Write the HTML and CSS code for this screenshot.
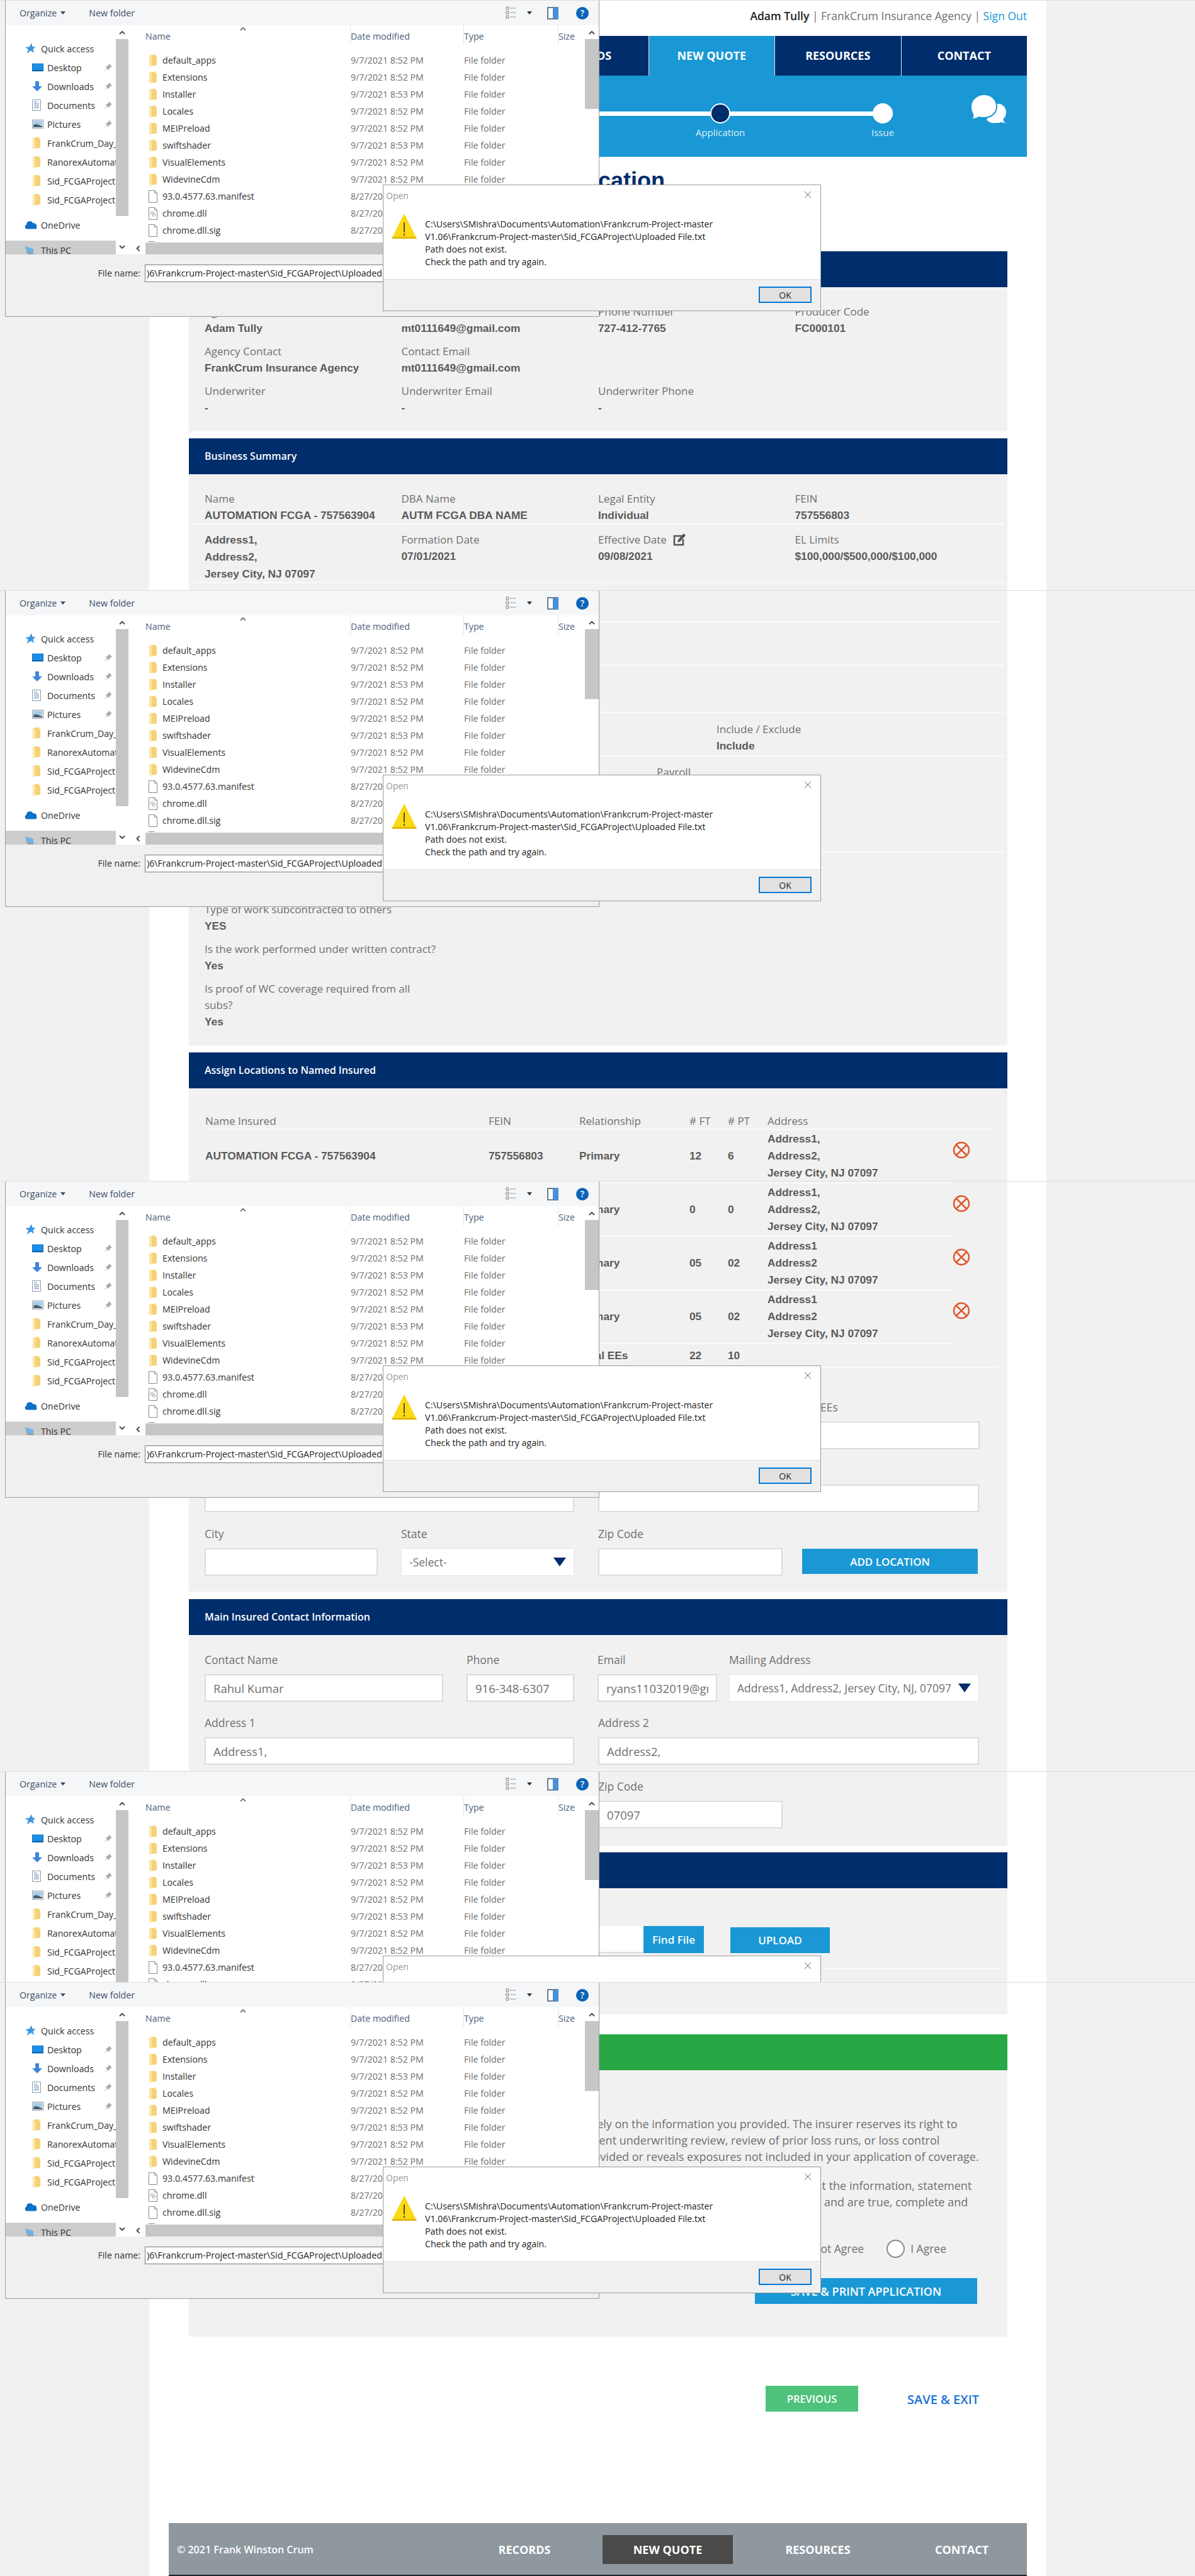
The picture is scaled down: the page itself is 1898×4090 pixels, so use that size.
FILE: index.html
```html
<!DOCTYPE html>
<html lang="en">

<head>
  <meta charset="UTF-8" />
  <title>New Quote - Application</title>
  <link rel="stylesheet" href="styles.css">
</head>

<body>
  <!-- icons used by the page and the file dialogs -->
  <svg class="sprite" xmlns="http://www.w3.org/2000/svg">
    <symbol id="i-folder" viewBox="0 0 14 20">
      <path d="M1 2l10-1.500v2.500l2 .5v14l-2 .5-10 1z" fill="#f5d277" />
      <path d="M1 2l4 1v16l-4 .5z" fill="#fbe6a6" />
    </symbol>
    <symbol id="i-file" viewBox="0 0 14 20">
      <path d="M.5 .5h9l4 4v15h-13z" fill="#fff" stroke="#8a8a8a" />
      <path d="M9.500 .5v4h4" fill="none" stroke="#8a8a8a" />
    </symbol>
    <symbol id="i-dll" viewBox="0 0 14 20">
      <path d="M.5 .5h9l4 4v15h-13z" fill="#fff" stroke="#8a8a8a" />
      <path d="M9.500 .5v4h4" fill="none" stroke="#8a8a8a" />
      <circle cx="5.500" cy="9" r="2.200" fill="none" stroke="#999" />
      <circle cx="8.500" cy="12" r="2.200" fill="none" stroke="#999" />
    </symbol>
    <symbol id="i-star" viewBox="0 0 18 18">
      <path d="M11 .5l1.500 5.500 5 .5-4 3.500 1.500 6-5-3.500-6.500 4.500 2.500-6.500-5-3.500 6.500-.5z" fill="#3d97e0" />
    </symbol>
    <symbol id="i-desktop" viewBox="0 0 18 13">
      <rect x=".5" y=".5" width="17" height="12" fill="#1b8fe8" stroke="#0b6bb8" />
      <rect x="1" y="10.500" width="16" height="2" fill="#0b5ea6" />
    </symbol>
    <symbol id="i-down" viewBox="0 0 16 16">
      <path d="M5 0h6v8h5l-8 8-8-8h5z" fill="#3f86d8" />
    </symbol>
    <symbol id="i-doc" viewBox="0 0 14 18">
      <path d="M.5 .5h13v17h-13z" fill="#fff" stroke="#8d9bab" />
      <path d="M3 4h5M3 7h8M3 10h8M3 13h8" stroke="#4a7aa8" />
    </symbol>
    <symbol id="i-pic" viewBox="0 0 18 14">
      <rect x=".5" y=".5" width="17" height="13" fill="#e8f2f8" stroke="#8d9bab" />
      <path d="M2 2h14v6H2z" fill="#a7cbe4" />
      <path d="M2 12V8l5-1 9 3v2z" fill="#47606e" />
    </symbol>
    <symbol id="i-cloud" viewBox="0 0 20 14">
      <path d="M4 13.500a3.500 3.500 0 0 1-1-6.800 5.500 5.500 0 0 1 10.500-2.300 4.500 4.500 0 0 1 5.500 5.600 2.500 2.500 0 0 1-1 3.500z" fill="#0f6fc6" />
    </symbol>
    <symbol id="i-pc" viewBox="0 0 16 14">
      <path d="M1 1l13 4v7L3 10z" fill="#6fb2e4" />
      <path d="M3 10l11 2 1 1.500H5z" fill="#8a9aa8" />
    </symbol>
    <symbol id="i-pin" viewBox="0 0 12 12">
      <path d="M7 0l5 5-2 .5-2.500 2.500-.5 2.500-2.500-2.500-3.500 3.500-.5-.5 3.500-3.500L1.500 5 4 4.500l2.500-2.500z" fill="#a9a9a9" />
    </symbol>
    <symbol id="i-chev" viewBox="0 0 10 7">
      <path d="M1 6l4-4 4 4" fill="none" stroke="currentColor" stroke-width="1.800" />
    </symbol>
    <symbol id="i-remove" viewBox="0 0 28 28">
      <circle cx="14" cy="14" r="12" fill="none" stroke="#e0582b" stroke-width="2.500" />
      <path d="M6 6l16 16M22 6L6 22" stroke="#e0582b" stroke-width="2.500" />
    </symbol>
  </svg>

  <div class="page">
    <div class="user-bar">
      <strong>Adam Tully</strong>&nbsp;| FrankCrum Insurance Agency |&nbsp;<a href="#">Sign Out</a>
    </div>

    <nav class="main-nav">
      <a href="#">HOME</a>
      <a href="#">AGENCY</a>
      <a href="#">RECORDS</a>
      <a href="#" class="active">NEW QUOTE</a>
      <a href="#">RESOURCES</a>
      <a href="#">CONTACT</a>
    </nav>

    <div class="hero">
      <div class="steps">
        <div class="step step-current"><span class="dot"></span><span class="step-name">Application</span></div>
        <div class="step"><span class="dot"></span><span class="step-name">Issue</span></div>
      </div>
      <svg class="chat-icon" viewBox="0 0 62 47" width="62" height="47">
        <path d="M42 15a13 13 0 0 1 15 13c0 5-2 9-5 11l2 5 4 2-9-2a14 14 0 0 1-9 1 14 14 0 0 1-14-5z" fill="#fff" />
        <path d="M22 0c11 0 20 8 20 19s-9 18-20 18c-3 0-6 0-8-1-4 3-9 3-13 3 3-2 4-5 3-8C2 28 1 24 1 19 1 8 11 0 22 0z" fill="#fff" stroke="#1a98d5" stroke-width="2" />
      </svg>
    </div>

    <h1 class="page-title">Workers Compensation Quote Application</h1>

    <section class="panel">
      <h2 class="panel-head">Agency Information</h2>
      <div class="panel-body summary-agency">
        <div class="field"><label>Agent</label><b>Adam Tully</b></div>
        <div class="field"><label>Email</label><b>mt0111649@gmail.com</b></div>
        <div class="field"><label>Phone Number</label><b>727-412-7765</b></div>
        <div class="field"><label>Producer Code</label><b>FC000101</b></div>
        <div class="field"><label>Agency Contact</label><b>FrankCrum Insurance Agency</b></div>
        <div class="field"><label>Contact Email</label><b>mt0111649@gmail.com</b></div>
        <div class="field"></div>
        <div class="field"></div>
        <div class="field"><label>Underwriter</label><b>-</b></div>
        <div class="field"><label>Underwriter Email</label><b>-</b></div>
        <div class="field"><label>Underwriter Phone</label><b>-</b></div>
      </div>
    </section>

    <section class="panel panel-business">
      <h2 class="panel-head">Business Summary</h2>
      <div class="panel-body business-body">
        <div class="summary-row row-name">
          <div class="field"><label>Name</label><b>AUTOMATION FCGA - 757563904</b></div>
          <div class="field"><label>DBA Name</label><b>AUTM FCGA DBA NAME</b></div>
          <div class="field"><label>Legal Entity</label><b>Individual</b></div>
          <div class="field"><label>FEIN</label><b>757556803</b></div>
        </div>
        <div class="summary-row row-dates">
          <div class="field address"><b>Address1,</b><b>Address2,</b><b>Jersey City, NJ 07097</b></div>
          <div class="field"><label>Formation Date</label><b>07/01/2021</b></div>
          <div class="field">
            <label>Effective Date
              <svg class="edit-icon" viewBox="0 0 20 20" width="20" height="20">
                <path d="M15 4H2v14h14V9" fill="none" stroke="#555" stroke-width="2.500" />
                <path d="M17 0l3 3-9 10-4 1 1-4z" fill="#555" />
              </svg>
            </label>
            <b>09/08/2021</b>
          </div>
          <div class="field"><label>EL Limits</label><b>$100,000/$500,000/$100,000</b></div>
        </div>
        <div class="blank-row row-a"></div>
        <div class="blank-row row-b"></div>
        <div class="blank-row row-c"></div>
        <div class="summary-row row-include">
          <div class="field"></div>
          <div class="field field-include"><label>Include / Exclude</label><b>Include</b></div>
        </div>
        <div class="summary-row row-payroll">
          <div class="field"></div>
          <div class="field field-payroll"><label>Payroll</label></div>
        </div>
        <div class="questions">
          <div class="field"><label>Type of work subcontracted to others</label><b>YES</b></div>
          <div class="field"><label>Is the work performed under written contract?</label><b>Yes</b></div>
          <div class="field"><label>Is proof of WC coverage required from all<br>subs?</label><b>Yes</b></div>
        </div>
      </div>
    </section>

    <section class="panel panel-locations">
      <h2 class="panel-head">Assign Locations to Named Insured</h2>
      <div class="panel-body locations-body">
        <div class="loc-grid loc-head">
          <span>Name Insured</span><span>FEIN</span><span>Relationship</span><span># FT</span><span># PT</span><span>Address</span>
        </div>
        <div class="loc-grid loc-row">
          <b>AUTOMATION FCGA - 757563904</b><b>757556803</b><b>Primary</b><b>12</b><b>6</b>
          <b class="loc-address">Address1,<br>Address2,<br>Jersey City, NJ 07097</b>
          <svg class="remove-icon" viewBox="0 0 28 28"><use href="#i-remove" /></svg>
        </div>
        <div class="loc-grid loc-row">
          <b>AUTOMATION FCGA - 757563904</b><b>757556803</b><b>Primary</b><b>0</b><b>0</b>
          <b class="loc-address">Address1,<br>Address2,<br>Jersey City, NJ 07097</b>
          <svg class="remove-icon" viewBox="0 0 28 28"><use href="#i-remove" /></svg>
        </div>
        <div class="loc-grid loc-row">
          <b>AUTOMATION FCGA - 757563904</b><b>757556803</b><b>Primary</b><b>05</b><b>02</b>
          <b class="loc-address">Address1<br>Address2<br>Jersey City, NJ 07097</b>
          <svg class="remove-icon" viewBox="0 0 28 28"><use href="#i-remove" /></svg>
        </div>
        <div class="loc-grid loc-row">
          <b>AUTOMATION FCGA - 757563904</b><b>757556803</b><b>Primary</b><b>05</b><b>02</b>
          <b class="loc-address">Address1<br>Address2<br>Jersey City, NJ 07097</b>
          <svg class="remove-icon" viewBox="0 0 28 28"><use href="#i-remove" /></svg>
        </div>
        <div class="loc-grid loc-total">
          <b></b><b></b><b>Total EEs</b><b>22</b><b>10</b>
        </div>

        <div class="form-row form-row-loc">
          <div class="input-group span-2"><label>Location Name</label><input type="text" /></div>
          <div class="input-group"><label># FT EEs</label><input type="text" /></div>
          <div class="input-group"><label># PT EEs</label><input type="text" /></div>
        </div>
        <div class="form-row form-row-half">
          <div class="input-group"><label>Address 1</label><input type="text" /></div>
          <div class="input-group"><label>Address 2</label><input type="text" /></div>
        </div>
        <div class="form-row form-row-city">
          <div class="input-group"><label>City</label><input type="text" /></div>
          <div class="input-group">
            <label>State</label>
            <div class="select"><span>-Select-</span><i class="caret"></i></div>
          </div>
          <div class="input-group"><label>Zip Code</label><input type="text" /></div>
          <button class="btn btn-add">ADD LOCATION</button>
        </div>
      </div>
    </section>

    <section class="panel panel-contact">
      <h2 class="panel-head">Main Insured Contact Information</h2>
      <div class="panel-body contact-body">
        <div class="form-row form-row-contact">
          <div class="input-group"><label>Contact Name</label><input type="text" value="Rahul Kumar" /></div>
          <div class="input-group"><label>Phone</label><input type="text" value="916-348-6307" /></div>
          <div class="input-group"><label>Email</label><input type="text" value="ryans11032019@gmail.com" /></div>
          <div class="input-group">
            <label>Mailing Address</label>
            <div class="select"><span>Address1, Address2, Jersey City, NJ, 07097</span><i class="caret"></i></div>
          </div>
        </div>
        <div class="form-row form-row-half">
          <div class="input-group"><label>Address 1</label><input type="text" value="Address1," /></div>
          <div class="input-group"><label>Address 2</label><input type="text" value="Address2," /></div>
        </div>
        <div class="form-row form-row-city form-row-zip">
          <div class="input-group"><label>City</label><input type="text" value="Jersey City" /></div>
          <div class="input-group"><label>State</label><input type="text" value="NJ" /></div>
          <div class="input-group"><label>Zip Code</label><input type="text" value="07097" /></div>
        </div>
      </div>
    </section>

    <section class="panel panel-upload">
      <h2 class="panel-head">Upload Documents</h2>
      <div class="panel-body upload-body">
        <div class="upload-row">
          <input type="text" class="upload-input" />
          <button class="btn btn-find">Find File</button>
          <button class="btn btn-upload">UPLOAD</button>
        </div>
        <div class="upload-line"></div>
      </div>
    </section>

    <section class="panel panel-agree">
      <h2 class="panel-head panel-head-green">Agreement</h2>
      <div class="panel-body agree-body">
        <p>Please note that a quote is an estimate only, and the premium is based solely on the information you provided. The insurer reserves its right to<br>
          change the premium and the terms of this coverage following any subsequent underwriting review, review of prior loss runs, or loss control<br>
          inspection if the information gathered differs from the information you provided or reveals exposures not included in your application of coverage.</p>
        <p>By selecting I Agree below, the applicant acknowledges and agrees that a quote is subject to change and confirms that the information, statement<br>
          and the answers provided in this application have been fully reviewed by the applicant and by the producer of record and are true, complete and<br>
          correct.</p>
        <div class="agree-choice">
          <label><span class="radio"></span>I Do Not Agree</label>
          <label><span class="radio"></span>I Agree</label>
        </div>
        <button class="btn btn-print">SAVE &amp; PRINT APPLICATION</button>
      </div>
    </section>

    <div class="page-actions">
      <button class="btn btn-prev">PREVIOUS</button>
      <a href="#" class="save-exit">SAVE &amp; EXIT</a>
    </div>

    <footer class="footer">
      <span class="copyright">© 2021 Frank Winston Crum</span>
      <a href="#">RECORDS</a>
      <a href="#" class="active">NEW QUOTE</a>
      <a href="#">RESOURCES</a>
      <a href="#" class="footer-last">CONTACT</a>
    </footer>
  </div>

  <!-- the same pair of windows is pasted over the page five times, see script.js -->
  <template id="shotTemplate">
    <div class="shot">
      <div class="file-window">
        <div class="toolbar">
          <span class="tool">Organize<i class="mini-caret"></i></span>
          <span class="tool tool-new">New folder</span>
          <span class="tool-right">
            <svg class="view-icon" viewBox="0 0 18 22" width="18" height="22">
              <path d="M1 1h4v4H1zM1 8h4v4H1zM1 15h4v4H1z" fill="none" stroke="#7a7a7a" />
              <path d="M8 3h9M8 10h9M8 17h9" stroke="#5a6a7a" stroke-dasharray="2 1" />
            </svg>
            <i class="mini-caret mini-caret-dark"></i>
            <span class="pane-icon"></span>
            <span class="help-icon">?</span>
          </span>
        </div>
        <div class="browser">
          <div class="tree">
            <div class="tree-row level-1"><svg width="18" height="18"><use href="#i-star" /></svg>Quick access</div>
            <div class="tree-row level-2"><svg width="18" height="13"><use href="#i-desktop" /></svg>Desktop<svg class="pin" width="12" height="12"><use href="#i-pin" /></svg></div>
            <div class="tree-row level-2"><svg width="16" height="16"><use href="#i-down" /></svg>Downloads<svg class="pin" width="12" height="12"><use href="#i-pin" /></svg></div>
            <div class="tree-row level-2"><svg width="14" height="18"><use href="#i-doc" /></svg>Documents<svg class="pin" width="12" height="12"><use href="#i-pin" /></svg></div>
            <div class="tree-row level-2"><svg width="18" height="14"><use href="#i-pic" /></svg>Pictures<svg class="pin" width="12" height="12"><use href="#i-pin" /></svg></div>
            <div class="tree-row level-2"><svg width="14" height="20"><use href="#i-folder" /></svg>FrankCrum_Day_4</div>
            <div class="tree-row level-2"><svg width="14" height="20"><use href="#i-folder" /></svg>RanorexAutomation</div>
            <div class="tree-row level-2"><svg width="14" height="20"><use href="#i-folder" /></svg>Sid_FCGAProject</div>
            <div class="tree-row level-2"><svg width="14" height="20"><use href="#i-folder" /></svg>Sid_FCGAProject</div>
            <div class="tree-row level-1 tree-gap"><svg width="20" height="14"><use href="#i-cloud" /></svg>OneDrive</div>
            <div class="tree-row level-1 tree-gap tree-selected"><svg width="16" height="14"><use href="#i-pc" /></svg>This PC</div>
          </div>
          <div class="scroll-y scroll-tree">
            <svg class="arrow" width="10" height="7"><use href="#i-chev" /></svg>
            <span class="thumb"></span>
            <svg class="arrow arrow-down" width="10" height="7"><use href="#i-chev" /></svg>
          </div>
          <div class="files">
            <div class="file-list">
              <div class="file-head">
                <span>Name<svg class="sort-mark" width="10" height="7"><use href="#i-chev" /></svg></span><span>Date modified</span><span>Type</span><span>Size</span>
              </div>
              <div class="file-rows"></div>
            </div>
            <div class="scroll-x">
              <svg class="arrow-left" width="10" height="7"><use href="#i-chev" /></svg>
              <span class="thumb"></span>
            </div>
          </div>
          <div class="scroll-y scroll-files">
            <svg class="arrow" width="10" height="7"><use href="#i-chev" /></svg>
            <span class="thumb"></span>
          </div>
        </div>
        <div class="name-bar">
          <span class="name-label">File name:</span>
          <span class="name-input">)6\Frankcrum-Project-master\Sid_FCGAProject\Uploaded File.txt</span>
        </div>
      </div>

      <div class="alert-box">
        <div class="alert-title">Open
          <svg class="alert-close" viewBox="0 0 12 12" width="12" height="12"><path d="M1 1l10 10M11 1L1 11" stroke="#666" /></svg>
        </div>
        <div class="alert-body">
          <svg class="warn-icon" viewBox="0 0 40 40" width="40" height="40">
            <path d="M20 0l20 40H0z" fill="#fbd914" />
            <path d="M0 40h40l-1.500-3h-37z" fill="#e3b90c" />
            <path d="M20 14v16M20 32v3" stroke="#222" stroke-width="1.500" />
          </svg>
          <div class="alert-text">
            C:\Users\SMishra\Documents\Automation\Frankcrum-Project-master<br>
            V1.06\Frankcrum-Project-master\Sid_FCGAProject\Uploaded File.txt<br>
            Path does not exist.<br>
            Check the path and try again.
          </div>
        </div>
        <div class="alert-foot"><button class="ok-btn">OK</button></div>
      </div>
    </div>
  </template>

  <script src="script.js"></script>
</body>

</html>
```
FILE: styles.css
```css
* {
  margin: 0;
  padding: 0;
  box-sizing: border-box;
}

body {
  background-color: #f1f1f1;
  color: #707070;
  font-family: "Open Sans", sans-serif;
  font-size: 17px;
  position: relative;
  height: 4090px;
  overflow: hidden;
}

.sprite {
  position: absolute;
  width: 0;
  height: 0;
}

/* Page */
.page {
  width: 1425px;
  height: 4090px;
  margin-left: 237px;
  padding: 0 31px;
  background: #fff;
  display: flex;
  flex-direction: column;
}

.user-bar {
  height: 57px;
  padding-top: 13px;
  text-align: right;
  font-size: 17.500px;
  line-height: 24px;
}

.user-bar strong {
  color: #222;
  font-weight: 600;
}

.user-bar a {
  color: #1a98d5;
  text-decoration: none;
}

.main-nav {
  height: 63px;
  background: #002d6b;
  display: flex;
  justify-content: flex-end;
}

.main-nav a {
  width: 200.500px;
  line-height: 63px;
  text-align: center;
  color: #fff;
  font-weight: 700;
  font-size: 18px;
  text-decoration: none;
  border-left: 1px solid #dfe6ee;
}

.main-nav a.active {
  background: #1a98d5;
}

.hero {
  height: 129px;
  background: #1a98d5;
  position: relative;
  padding-top: 44px;
}

.steps {
  width: 1017px;
  margin-left: 133px;
  height: 34px;
  background: linear-gradient(#fff, #fff) no-repeat left 13px / 100% 7px;
  display: flex;
  justify-content: flex-end;
  gap: 226px;
}

.step {
  width: 32px;
  position: relative;
}

.dot {
  display: block;
  width: 32px;
  height: 32px;
  border-radius: 50%;
  background: #fff;
}

.step-current .dot {
  background: #002d6b;
  border: 2px solid #fff;
}

.step-name {
  position: absolute;
  top: 36px;
  left: 50%;
  transform: translateX(-50%);
  color: #fff;
  font-size: 15px;
  line-height: 20px;
  opacity: .85;
}

.chat-icon {
  position: absolute;
  right: 28px;
  top: 30px;
}

.page-title {
  height: 150px;
  padding-top: 16px;
  padding-left: 66px;
  color: #002d6b;
  font-family: "Liberation Sans", Arial, sans-serif;
  font-size: 36px;
  font-weight: 700;
  white-space: nowrap;
  line-height: 44px;
}

/* Panels */
.panel {
  width: 1300px;
  margin-left: 32px;
  background: #f1f1f1;
}

.panel-head {
  height: 57px;
  padding-left: 25px;
  background: #002d6b;
  color: #fff;
  font-size: 16px;
  font-weight: 600;
  line-height: 57px;
}

.panel-head-green {
  background: #28a745;
}

.panel-body {
  padding: 0 25px;
}

.field label {
  display: block;
  line-height: 26px;
}

.field b,
.loc-grid b {
  display: block;
  font-family: "Liberation Sans", Arial, sans-serif;
  font-weight: 700;
  font-size: 17.300px;
  color: #5a5a5a;
}

.field b {
  line-height: 26px;
}

.summary-agency {
  height: 229px;
  padding-top: 26px;
  display: grid;
  grid-template-columns: repeat(4, 312.500px);
  grid-auto-rows: 63px;
}

.panel-business {
  margin-top: 11px;
}

.business-body {
  height: 907px;
  padding-top: 26px;
}

.summary-row {
  display: grid;
  grid-template-columns: repeat(4, 312.500px);
  margin: 0 -20px;
  padding: 0 20px;
  border-bottom: 2px solid #fafafa;
}

.row-name {
  height: 54px;
}

.row-dates {
  height: 93px;
  padding-top: 11px;
}

.field.address b {
  line-height: 27px;
}

.edit-icon {
  vertical-align: -4px;
  margin-left: 6px;
}

.blank-row {
  margin: 0 -20px;
  border-bottom: 2px solid #fafafa;
}

.row-a { height: 62px; }
.row-b { height: 69px; }
.row-c { height: 75px; }

.row-include {
  height: 70px;
  padding-top: 13px;
  grid-template-columns: 813px 1fr;
}

.row-payroll {
  height: 151px;
  padding-top: 11px;
  grid-template-columns: 718px 1fr;
}

.questions {
  padding-top: 78px;
  width: 420px;
}

.questions .field {
  margin-bottom: 11px;
}

/* Locations table */
.panel-locations {
  margin-top: 11px;
}

.locations-body {
  height: 799px;
  padding-top: 38px;
}

.loc-grid {
  display: grid;
  grid-template-columns: 450px 144px 175px 61px 63px 1fr;
  align-items: center;
  position: relative;
}

.loc-head {
  height: 26px;
  padding-left: 1px;
  margin-right: -2px;
  border-bottom: 2px solid #fafafa;
  box-sizing: content-box;
}

.loc-row {
  height: 85px;
  padding-left: 1px;
  margin-right: 63px;
  border-bottom: 2px solid #fafafa;
}

.loc-row .loc-address {
  line-height: 27px;
}

.remove-icon {
  position: absolute;
  width: 28px;
  height: 28px;
  left: 1188px;
  top: 18px;
}

.loc-total {
  height: 38px;
  padding-left: 1px;
  margin: 0 -8px 0 0;
  border-bottom: 2px solid #fafafa;
}

.form-row {
  display: grid;
}

.input-group label {
  display: block;
  line-height: 24px;
  margin-bottom: 11px;
  font-size: 17.500px;
}

.input-group input {
  display: block;
  width: 100%;
  height: 44px;
  padding: 0 12px;
  background: #fff;
  border: 2px solid #dcdcdc;
  color: #707070;
  font-family: inherit;
  font-size: 18.500px;
  outline: none;
}

.select {
  height: 44px;
  padding: 0 12px;
  background: #fff;
  border: 1px solid #e6e6e6;
  display: flex;
  align-items: center;
  justify-content: space-between;
  white-space: nowrap;
  font-size: 17.500px;
}

.caret {
  width: 0;
  height: 0;
  border-left: 10px solid transparent;
  border-right: 10px solid transparent;
  border-top: 14px solid #002d6b;
  flex: none;
}

.form-row-loc {
  margin-top: 50px;
  grid-template-columns: repeat(4, 312.500px);
}

.form-row-loc .span-2 {
  grid-column: span 2;
}

.form-row-loc .input-group input {
  width: 293px;
}

.form-row-loc .input-group:nth-child(1) input,
.form-row-half .input-group:nth-child(1) input {
  width: 587px;
}

.form-row-half {
  grid-template-columns: 625px 605px;
  margin-top: 21px;
}

.form-row-city {
  grid-template-columns: 312px 313px 324px 1fr;
  margin-top: 22px;
}

.form-row-city .input-group:nth-child(1) input,
.form-row-city .input-group:nth-child(2) input,
.form-row-city .select {
  width: 275px;
}

.form-row-city .input-group:nth-child(3) input {
  width: 293px;
}

.btn {
  border: none;
  background: #1a98d5;
  color: #fff;
  font-family: inherit;
  font-size: 17px;
  font-weight: 600;
  cursor: pointer;
}

.btn-add {
  height: 40px;
  width: 279px;
  align-self: end;
  margin-bottom: 3px;
}

/* Main insured contact */
.panel-contact {
  margin-top: 12px;
}

.contact-body {
  height: 335px;
  padding-top: 27px;
}

.form-row-contact {
  grid-template-columns: 416px 208px 209px 397px;
}

.form-row-contact .input-group:nth-child(1) input { width: 379px; }
.form-row-contact .input-group:nth-child(2) input { width: 171px; }
.form-row-contact .input-group:nth-child(3) input { width: 190px; }

/* Upload */
.panel-upload {
  margin-top: 10px;
}

.upload-body {
  height: 200px;
  padding-top: 60px;
}

.upload-row {
  display: flex;
  align-items: flex-end;
  padding-left: 372px;
  height: 43px;
}

.upload-input {
  width: 325px;
  height: 43px;
  background: #fff;
  border: none;
  border-bottom: 2px solid #dcdcdc;
}

.btn-find {
  width: 96px;
  height: 43px;
}

.btn-upload {
  width: 158px;
  height: 41px;
  margin-left: 42px;
}

.upload-line {
  margin: 23px -20px 0;
  border-bottom: 2px solid #fafafa;
}

/* Agreement */
.panel-agree {
  margin-top: 32px;
}

.agree-body {
  height: 423px;
  padding-top: 72px;
}

.agree-body p {
  white-space: nowrap;
  line-height: 26px;
  font-size: 18px;
  margin-bottom: 20px;
}

.agree-choice {
  display: flex;
  justify-content: flex-end;
  gap: 36px;
  padding-right: 72px;
  margin-top: 5px;
  font-size: 17.500px;
  line-height: 30px;
}

.agree-choice label {
  display: flex;
  align-items: center;
  gap: 9px;
}

.radio {
  width: 29px;
  height: 29px;
  border-radius: 50%;
  background: #fff;
  border: 2px solid #8a8a8a;
}

.btn-print {
  display: block;
  width: 353px;
  height: 41px;
  margin: 32px 0 0 874px;
  font-size: 18px;
}

/* Bottom of page */
.page-actions {
  margin-left: 948px;
  margin-top: 78px;
  height: 41px;
  display: flex;
  align-items: center;
}

.btn-prev {
  width: 147px;
  height: 41px;
  background: #4fc27b;
  font-size: 16.500px;
}

.save-exit {
  margin-left: 78px;
  padding-top: 2px;
  color: #1a73d8;
  font-size: 20px;
  font-weight: 600;
  text-decoration: none;
}

.footer {
  margin-top: auto;
  height: 84px;
  padding-top: 1px;
  background: #8f989f;
  border-bottom: 2px solid #222;
  display: grid;
  grid-template-columns: 441px 248px 207px 270px 1fr;
  align-items: center;
  color: #fff;
  text-align: center;
  font-weight: 700;
  font-size: 18px;
}

.footer a {
  color: #fff;
  text-decoration: none;
  line-height: 46px;
}

.footer a.active {
  background: #4a4a4a;
}

.footer-last {
  padding-right: 10px;
}

.copyright {
  text-align: left;
  padding-left: 13px;
  font-weight: 600;
  font-size: 16px;
}

/* Pasted dialog windows */
.shot {
  position: absolute;
  left: 0;
  right: 0;
  height: 503px;
  overflow: hidden;
  border-top: 1px solid #dedede;
}

.shot-1 { top: 0; }
.shot-2 { top: 937px; }
.shot-3 { top: 1875px; }
.shot-4 { top: 2812px; height: 335px; }
.shot-5 { top: 3147px; }

.file-window {
  width: 944px;
  height: 502px;
  margin-left: 8px;
  background: #fff;
  border: 1px solid #9b9b9b;
  border-top: none;
  color: #333;
  font-size: 14.200px;
  display: flex;
  flex-direction: column;
}

.toolbar {
  height: 39px;
  flex: none;
  background: #f5f6f7;
  padding: 0 16px 0 22px;
  display: flex;
  align-items: center;
  color: #3b4d66;
}

.tool {
  display: flex;
  align-items: center;
  gap: 6px;
}

.tool-new {
  margin-left: 37px;
}

.mini-caret {
  width: 0;
  height: 0;
  border-left: 4px solid transparent;
  border-right: 4px solid transparent;
  border-top: 5px solid #3b4d66;
}

.tool-right {
  margin-left: auto;
  display: flex;
  align-items: center;
}

.mini-caret-dark {
  margin-left: 16px;
  border-top-color: #333;
}

.pane-icon {
  margin-left: 24px;
  width: 18px;
  height: 20px;
  border: 2px solid #6b7c8e;
  border-right-width: 9px;
  border-right-color: #4a90d9;
  background: #fff;
}

.help-icon {
  margin-left: 28px;
  width: 20px;
  height: 20px;
  border-radius: 50%;
  background: #0c64b8;
  color: #fff;
  font-weight: 600;
  text-align: center;
  line-height: 20px;
}

.browser {
  height: 364px;
  flex: none;
  display: flex;
}

.tree {
  width: 175px;
  flex: none;
  padding-top: 22px;
  overflow: hidden;
}

.tree-row {
  height: 30px;
  display: flex;
  align-items: center;
  white-space: nowrap;
  position: relative;
  overflow: hidden;
}

.level-1 {
  padding-left: 56px;
}

.level-2 {
  padding-left: 66px;
}

.tree-row > svg:first-child {
  position: absolute;
  left: 42px;
  top: 50%;
  transform: translateY(-50%);
}

.level-1 > svg:first-child {
  left: 30px;
}

.tree-gap {
  margin-top: 10px;
}

.tree-selected {
  background: #cdcdcd;
}

.pin {
  position: absolute;
  left: 157px;
}

.scroll-y {
  flex: none;
  display: flex;
  flex-direction: column;
  align-items: center;
  color: #444;
}

.scroll-tree {
  width: 20px;
}

.scroll-files {
  width: 22px;
}

.scroll-y .arrow {
  margin: 8px 0 7px;
  flex: none;
}

.scroll-y .thumb {
  width: 100%;
  background: #c6c6c6;
  height: 281px;
}

.scroll-files .thumb {
  height: 111px;
}

.scroll-tree .arrow-down {
  margin-top: 46px;
  transform: rotate(180deg);
}

.files {
  flex: 1;
  margin-left: 3px;
  display: flex;
  flex-direction: column;
  min-width: 0;
}

.file-list {
  flex: 1;
  overflow: hidden;
}

.file-head,
.file-row {
  display: grid;
  grid-template-columns: 326px 180px 150px 1fr;
  padding-left: 24px;
}

.file-head {
  height: 42px;
  line-height: 36px;
  color: #4c607a;
}

.file-head span {
  border-right: 1px solid #e5e5e5;
  height: 32px;
  position: relative;
}

.file-head span:last-child {
  border-right: none;
}

.sort-mark {
  position: absolute;
  left: 150px;
  top: 2px;
  color: #777;
}

.file-row {
  height: 27px;
  align-items: center;
  color: #6f6f6f;
  white-space: nowrap;
}

.file-name {
  display: flex;
  align-items: center;
  gap: 8px;
  padding-left: 5px;
  color: #333;
}

.scroll-x {
  height: 20px;
  flex: none;
  display: flex;
  align-items: center;
  color: #444;
}

.arrow-left {
  width: 24px;
  transform: rotate(-90deg);
}

.scroll-x .thumb {
  flex: 1;
  height: 19px;
  background: #c6c6c6;
}

.name-bar {
  flex: 1;
  background: #f0f0f0;
  padding-top: 16px;
  display: flex;
  align-items: flex-start;
}

.name-label {
  width: 221px;
  text-align: right;
  padding-right: 7px;
  line-height: 28px;
}

.name-input {
  width: 700px;
  height: 28px;
  border: 1px solid #7a7a7a;
  background: #fff;
  padding-left: 2px;
  line-height: 26px;
  white-space: nowrap;
  overflow: hidden;
  color: #222;
}

.alert-box {
  position: absolute;
  left: 608px;
  top: 292px;
  width: 696px;
  height: 201px;
  background: #fff;
  border: 1px solid #9b9b9b;
  display: flex;
  flex-direction: column;
  color: #222;
  font-size: 14.200px;
}

.alert-title {
  height: 32px;
  padding: 5px 0 0 4px;
  color: #999;
  font-size: 14px;
  line-height: 24px;
  position: relative;
  flex: none;
}

.alert-close {
  position: absolute;
  right: 14px;
  top: 9px;
}

.alert-body {
  height: 117px;
  flex: none;
  display: flex;
  padding-left: 13px;
  padding-top: 13px;
  gap: 13px;
}

.alert-text {
  margin-top: 7px;
  line-height: 20px;
  white-space: nowrap;
}

.alert-foot {
  flex: 1;
  background: #f0f0f0;
  border-top: 1px solid #dfdfdf;
  display: flex;
  justify-content: flex-end;
  align-items: flex-start;
  padding: 11px 14px 0 0;
}

.ok-btn {
  width: 84px;
  height: 26px;
  border: 2px solid #0078d7;
  background: #e1e1e1;
  color: #222;
  font-family: inherit;
  font-size: 14px;
}
```
FILE: script.js
```js
// File list shown in every dialog
const files = [
  ["default_apps", "9/7/2021 8:52 PM", "File folder", "i-folder"],
  ["Extensions", "9/7/2021 8:52 PM", "File folder", "i-folder"],
  ["Installer", "9/7/2021 8:53 PM", "File folder", "i-folder"],
  ["Locales", "9/7/2021 8:52 PM", "File folder", "i-folder"],
  ["MEIPreload", "9/7/2021 8:52 PM", "File folder", "i-folder"],
  ["swiftshader", "9/7/2021 8:53 PM", "File folder", "i-folder"],
  ["VisualElements", "9/7/2021 8:52 PM", "File folder", "i-folder"],
  ["WidevineCdm", "9/7/2021 8:52 PM", "File folder", "i-folder"],
  ["93.0.4577.63.manifest", "8/27/2021 1:26 PM", "MANIFEST File", "i-file"],
  ["chrome.dll", "8/27/2021 1:26 PM", "Application extension", "i-dll"],
  ["chrome.dll.sig", "8/27/2021 1:26 PM", "SIG File", "i-file"],
  ["", "", "", "i-file"]
];

const template = document.getElementById("shotTemplate");

for (let i = 1; i <= 5; i++) {
  const shot = template.content.cloneNode(true);
  shot.querySelector(".shot").classList.add(`shot-${i}`);

  const rows = shot.querySelector(".file-rows");
  files.forEach(([name, date, type, icon]) => {
    const row = document.createElement("div");
    row.className = "file-row";
    row.innerHTML = `<span class="file-name"><svg width="14" height="20"><use href="#${icon}" /></svg>${name}</span><span>${date}</span><span>${type}</span>`;
    rows.appendChild(row);
  });

  document.body.appendChild(shot);
}
```
